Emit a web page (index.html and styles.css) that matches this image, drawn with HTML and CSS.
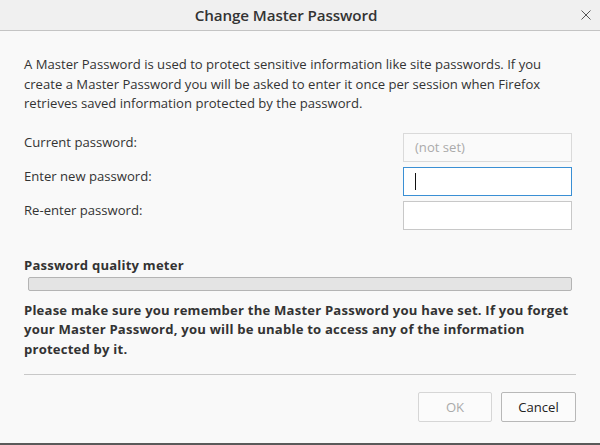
FILE: index.html
```html
<!DOCTYPE html>
<html>
<head>
<meta charset="utf-8">
<link rel="stylesheet" href="styles.css">
</head>
<body>
<div class="dialog">
  <div class="titlebar">
    <span class="title">Change Master Password</span>
    <svg class="close" width="10" height="10" viewBox="0 0 10 10"><path d="M0.5 0.5L9.5 9.5M9.5 0.5L0.5 9.5" stroke="#555" stroke-width="1" fill="none"/></svg>
  </div>
  <div class="content">
    <p class="intro">A Master Password is used to protect sensitive information like site passwords. If you<br>create a Master Password you will be asked to enter it once per session when Firefox<br>retrieves saved information protected by the password.</p>
    <div class="form">
      <label class="label">Current password:</label>
      <div class="input disabled">(not set)</div>
      <label class="label">Enter new password:</label>
      <div class="input focused"><span class="caret"></span></div>
      <label class="label">Re-enter password:</label>
      <div class="input"></div>
    </div>
    <div class="meter-title">Password quality meter</div>
    <div class="meter"></div>
    <p class="warning">Please make sure you remember the Master Password you have set. If you forget<br>your Master Password, you will be unable to access any of the information<br>protected by it.</p>
    <div class="separator"></div>
    <div class="buttons">
      <button class="btn disabled-btn">OK</button>
      <button class="btn">Cancel</button>
    </div>
  </div>
  <div class="bottom-edge"></div>
</div>
</body>
</html>
```
FILE: styles.css
```css
html, body {
  margin: 0;
  padding: 0;
}
body {
  width: 600px;
  height: 445px;
  overflow: hidden;
  font-family: "Open Sans", "Noto Sans", sans-serif;
  color: #333;
}
.dialog {
  width: 600px;
  height: 445px;
  display: flex;
  flex-direction: column;
  background: #f9f9f9;
}
.titlebar {
  height: 30px;
  flex: none;
  background: #f0f0f0;
  border-bottom: 1px solid #c4c4c4;
  display: flex;
  align-items: center;
  justify-content: center;
  padding-right: 28px;
  position: relative;
}
.title {
  font-size: 15.2px;
  font-weight: 600;
  color: #333;
  letter-spacing: -0.1px;
}
.close {
  position: absolute;
  right: 9px;
  top: 10px;
}
.content {
  flex: 1;
  padding: 0 24px 0 24px;
  display: flex;
  flex-direction: column;
}
.intro {
  margin: 24px 0 0 0;
  font-size: 13.1px;
  line-height: 19.6px;
  color: #333;
}
.form {
  margin-top: 19px;
  display: grid;
  grid-template-columns: 1fr 169px;
  row-gap: 5px;
  margin-right: 4px;
}
.label {
  font-size: 13.1px;
  line-height: 18px;
}
.input {
  height: 27px;
  border: 1px solid #c8c8c8;
  background: #fff;
  box-sizing: content-box;
  font-size: 13.1px;
  line-height: 27px;
  padding-left: 11px;
  display: flex;
  align-items: center;
}
.input.disabled {
  background: #fafafa;
  color: #aaa;
  border-color: #dadada;
}
.input.focused {
  border-color: #3a8fd4;
}
.caret {
  width: 1px;
  height: 17px;
  background: #111;
}
.meter-title {
  margin-top: 26px;
  font-size: 13.1px;
  font-weight: 700;
  letter-spacing: 0.2px;
  line-height: 18px;
}
.meter {
  margin: 3px 4px 0 4px;
  height: 12px;
  border: 1px solid #b4b4b4;
  border-radius: 2px;
  background: #e4e4e4;
}
.warning {
  margin: 10px 0 0 0;
  font-size: 13.1px;
  font-weight: 700;
  line-height: 19.6px;
  letter-spacing: 0.2px;
  color: #333;
}
.separator {
  margin-top: 14px;
  height: 1px;
  background: #c8c8c8;
}
.buttons {
  margin-top: 17px;
  display: flex;
  justify-content: flex-end;
  gap: 9px;
}
.btn {
  width: 75px;
  height: 30px;
  border: 1px solid #b8b8b8;
  border-radius: 2px;
  background: #fbfbfb;
  font-family: "Open Sans", "Noto Sans", sans-serif;
  font-size: 13.1px;
  color: #222;
}
.disabled-btn {
  color: #aaa;
  border-color: #d6d6d6;
  width: 74px;
}
.bottom-edge {
  height: 2px;
  flex: none;
  background: #5a5a5a;
}
```
